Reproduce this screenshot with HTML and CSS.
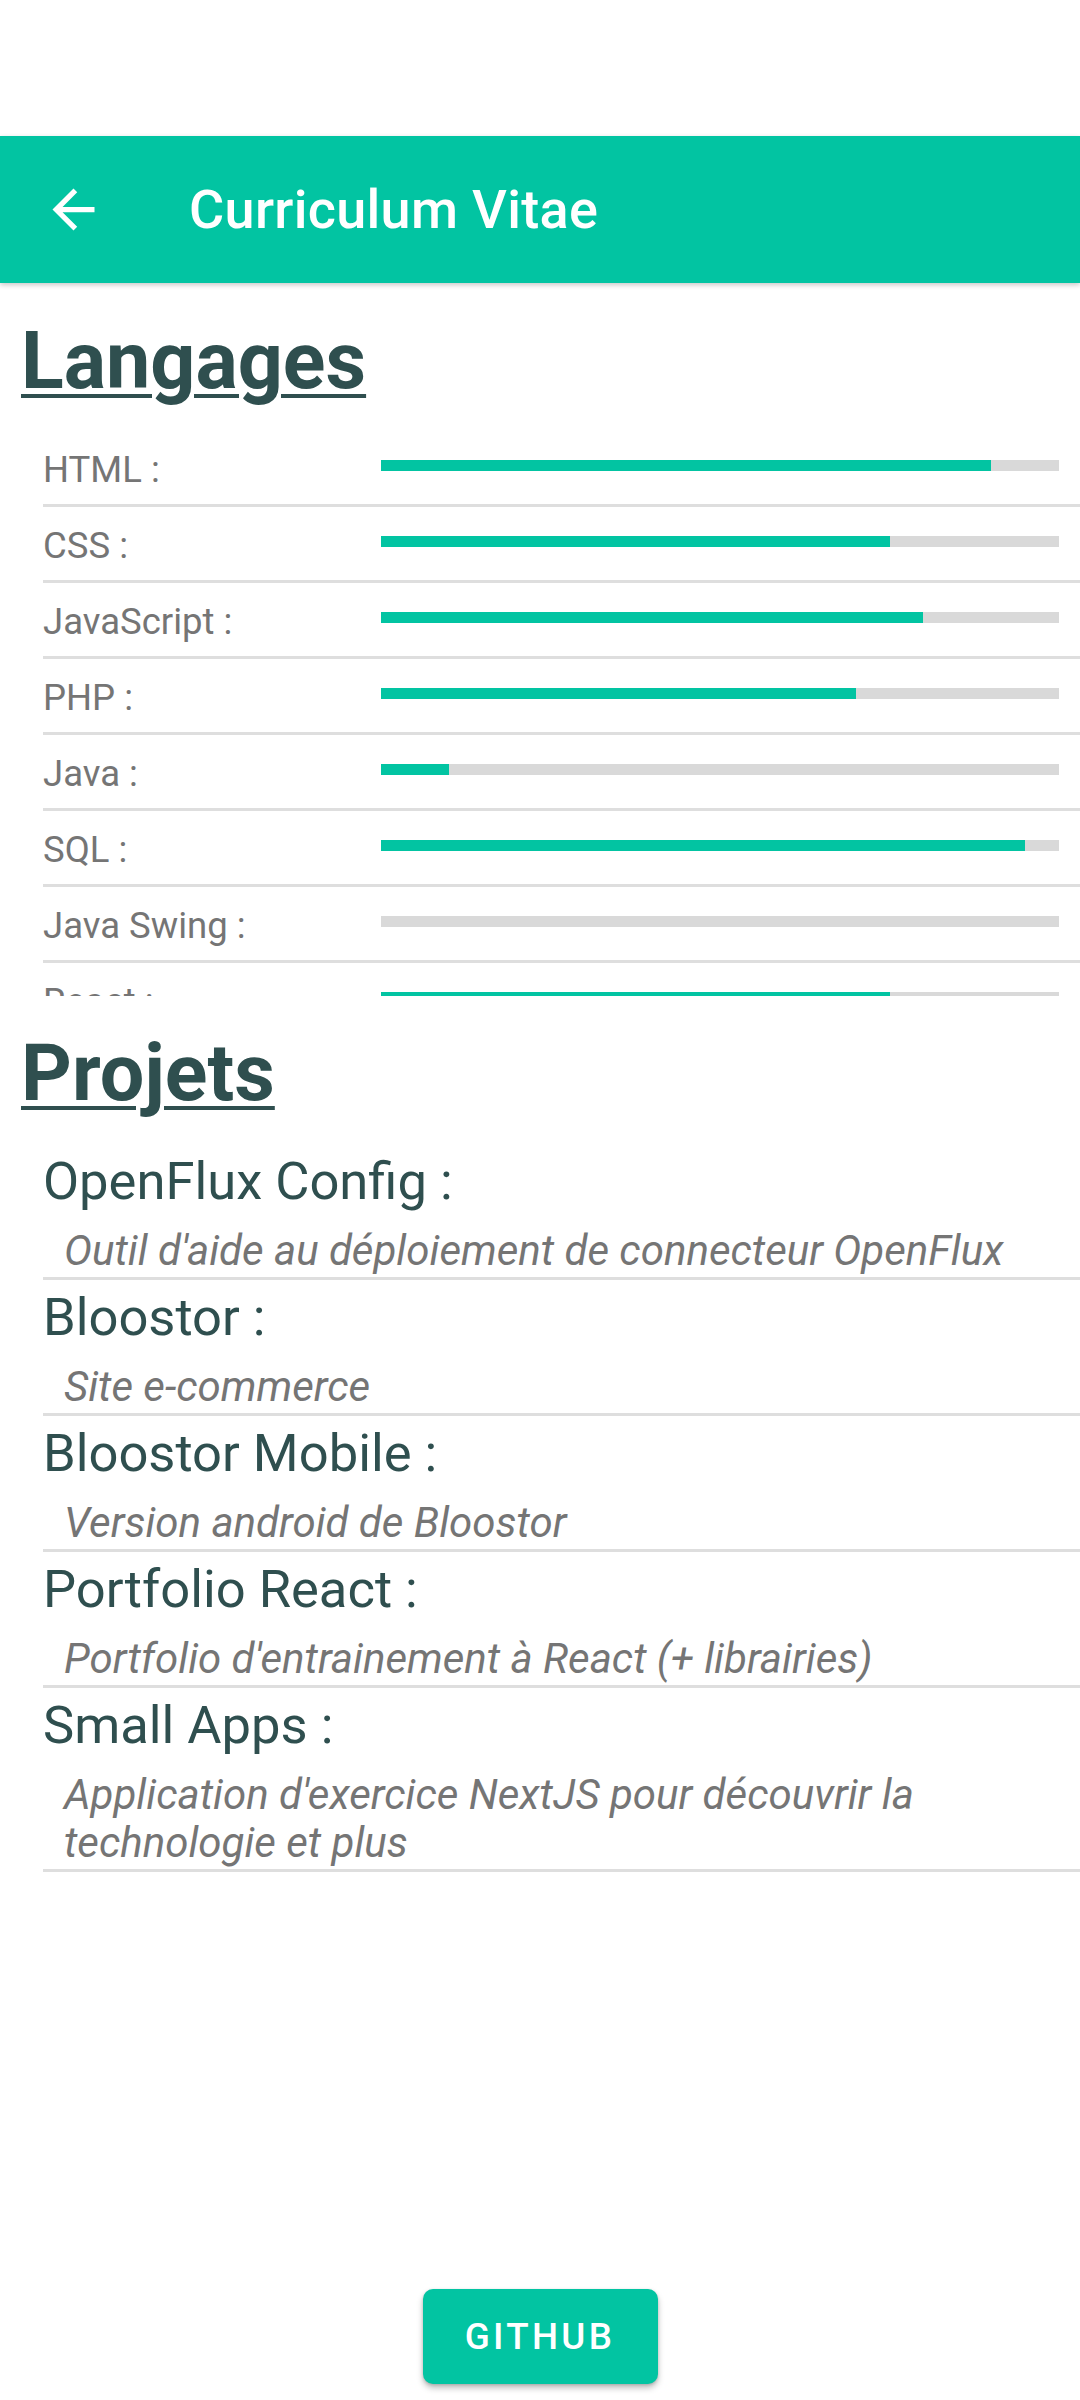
FILE: index.html
```html
<!DOCTYPE html>
<html lang="fr">
<head>
<meta charset="utf-8">
<title>Curriculum Vitae</title>
<link rel="stylesheet" href="styles.css">
</head>
<body>
<div class="status-space"></div>
<header class="appbar">
  <svg class="back" viewBox="0 0 24 24" width="63" height="63" aria-hidden="true">
    <path d="M20 11H7.83l5.59-5.59L12 4l-8 8 8 8 1.41-1.41L7.83 13H20v-2z" fill="#ffffff"/>
  </svg>
  <h1 class="appbar-title">Curriculum Vitae</h1>
</header>

<main class="content">
  <h2 class="section-title">Langages</h2>
  <div class="lang-list">
    <div class="lang-row"><span class="lang-label">HTML :</span><div class="bar"><div class="bar-fill" style="width:90%"></div></div></div>
    <div class="lang-row"><span class="lang-label">CSS :</span><div class="bar"><div class="bar-fill" style="width:75%"></div></div></div>
    <div class="lang-row"><span class="lang-label">JavaScript :</span><div class="bar"><div class="bar-fill" style="width:80%"></div></div></div>
    <div class="lang-row"><span class="lang-label">PHP :</span><div class="bar"><div class="bar-fill" style="width:70%"></div></div></div>
    <div class="lang-row"><span class="lang-label">Java :</span><div class="bar"><div class="bar-fill" style="width:10%"></div></div></div>
    <div class="lang-row"><span class="lang-label">SQL :</span><div class="bar"><div class="bar-fill" style="width:95%"></div></div></div>
    <div class="lang-row"><span class="lang-label">Java Swing :</span><div class="bar"><div class="bar-fill" style="width:0%"></div></div></div>
    <div class="lang-row"><span class="lang-label">React :</span><div class="bar"><div class="bar-fill" style="width:75%"></div></div></div>
  </div>

  <h2 class="section-title projects-title">Projets</h2>
  <div class="project-list">
    <div class="project">
      <div class="project-name">OpenFlux Config :</div>
      <div class="project-desc">Outil d'aide au déploiement de connecteur OpenFlux</div>
    </div>
    <div class="project">
      <div class="project-name">Bloostor :</div>
      <div class="project-desc">Site e-commerce</div>
    </div>
    <div class="project">
      <div class="project-name">Bloostor Mobile :</div>
      <div class="project-desc">Version android de Bloostor</div>
    </div>
    <div class="project">
      <div class="project-name">Portfolio React :</div>
      <div class="project-desc">Portfolio d'entrainement à React (+ librairies)</div>
    </div>
    <div class="project">
      <div class="project-name">Small Apps :</div>
      <div class="project-desc">Application d'exercice NextJS pour découvrir la technologie et plus</div>
    </div>
  </div>
</main>

<div class="footer">
  <button class="github-btn" type="button">GITHUB</button>
</div>
</body>
</html>
```

FILE: styles.css
```css
html, body {
  margin: 0;
  padding: 0;
}

body {
  width: 1080px;
  height: 2400px;
  background: #ffffff;
  font-family: Roboto, "Noto Sans", "Liberation Sans", sans-serif;
  display: flex;
  flex-direction: column;
  overflow: hidden;
}

.status-space {
  height: 136px;
  flex: none;
}

.appbar {
  flex: none;
  height: 147px;
  background: #02c4a2;
  display: flex;
  align-items: center;
  box-shadow: 0 2px 5px rgba(0, 0, 0, 0.22);
  position: relative;
  z-index: 1;
}

.back {
  display: block;
  margin-left: 42px;
  flex: none;
}

.appbar-title {
  margin: 0 0 0 84px;
  font-size: 54px;
  font-weight: 500;
  color: #ffffff;
  line-height: 62px;
  letter-spacing: 0.3px;
}

.content {
  flex: none;
}

.section-title {
  margin: 32px 0 0 21px;
  font-size: 79px;
  line-height: 92px;
  font-weight: 700;
  color: #2f4f4f;
  text-decoration: underline;
  text-decoration-thickness: 3.5px;
  text-underline-offset: 6px;
  text-decoration-skip-ink: auto;
}

.projects-title {
  margin-top: 31px;
}

.lang-list {
  margin-top: 24px;
  height: 565px;
  overflow: hidden;
}

.lang-row {
  margin-left: 43px;
  height: 76px;
  box-sizing: border-box;
  border-bottom: 3px solid #dedede;
  display: flex;
  align-items: flex-start;
  padding-top: 17px;
}

.lang-label {
  width: 338px;
  flex: none;
  font-size: 36.5px;
  line-height: 43px;
  color: #757575;
}

.bar {
  margin-top: 12px;
  width: 678px;
  height: 10.5px;
  background: #d9d9d9;
  flex: none;
}

.bar-fill {
  height: 100%;
  background: #02c4a2;
}

.project-list {
  margin-top: 25px;
}

.project {
  margin-left: 43px;
  padding: 1px 0 1px;
  border-bottom: 3px solid #dedede;
}

.project-name {
  font-size: 52.5px;
  line-height: 61.5px;
  padding: 6px 0 1.5px;
  color: #2f4f4f;
}

.project-desc {
  padding: 13px 21px 1px 21px;
  font-size: 42px;
  line-height: 48px;
  font-style: italic;
  color: #757575;
}

.footer {
  margin-top: auto;
  display: flex;
  justify-content: center;
  padding-bottom: 16px;
}

.github-btn {
  width: 235px;
  height: 95px;
  border: none;
  border-radius: 10px;
  background: #02c4a2;
  color: #ffffff;
  font-family: Roboto, "Noto Sans", sans-serif;
  font-size: 36.75px;
  font-weight: 500;
  letter-spacing: 3.3px;
  box-shadow: 0 4px 6px rgba(0, 0, 0, 0.25), 0 1px 3px rgba(0, 0, 0, 0.15);
  padding: 0;
}
```
